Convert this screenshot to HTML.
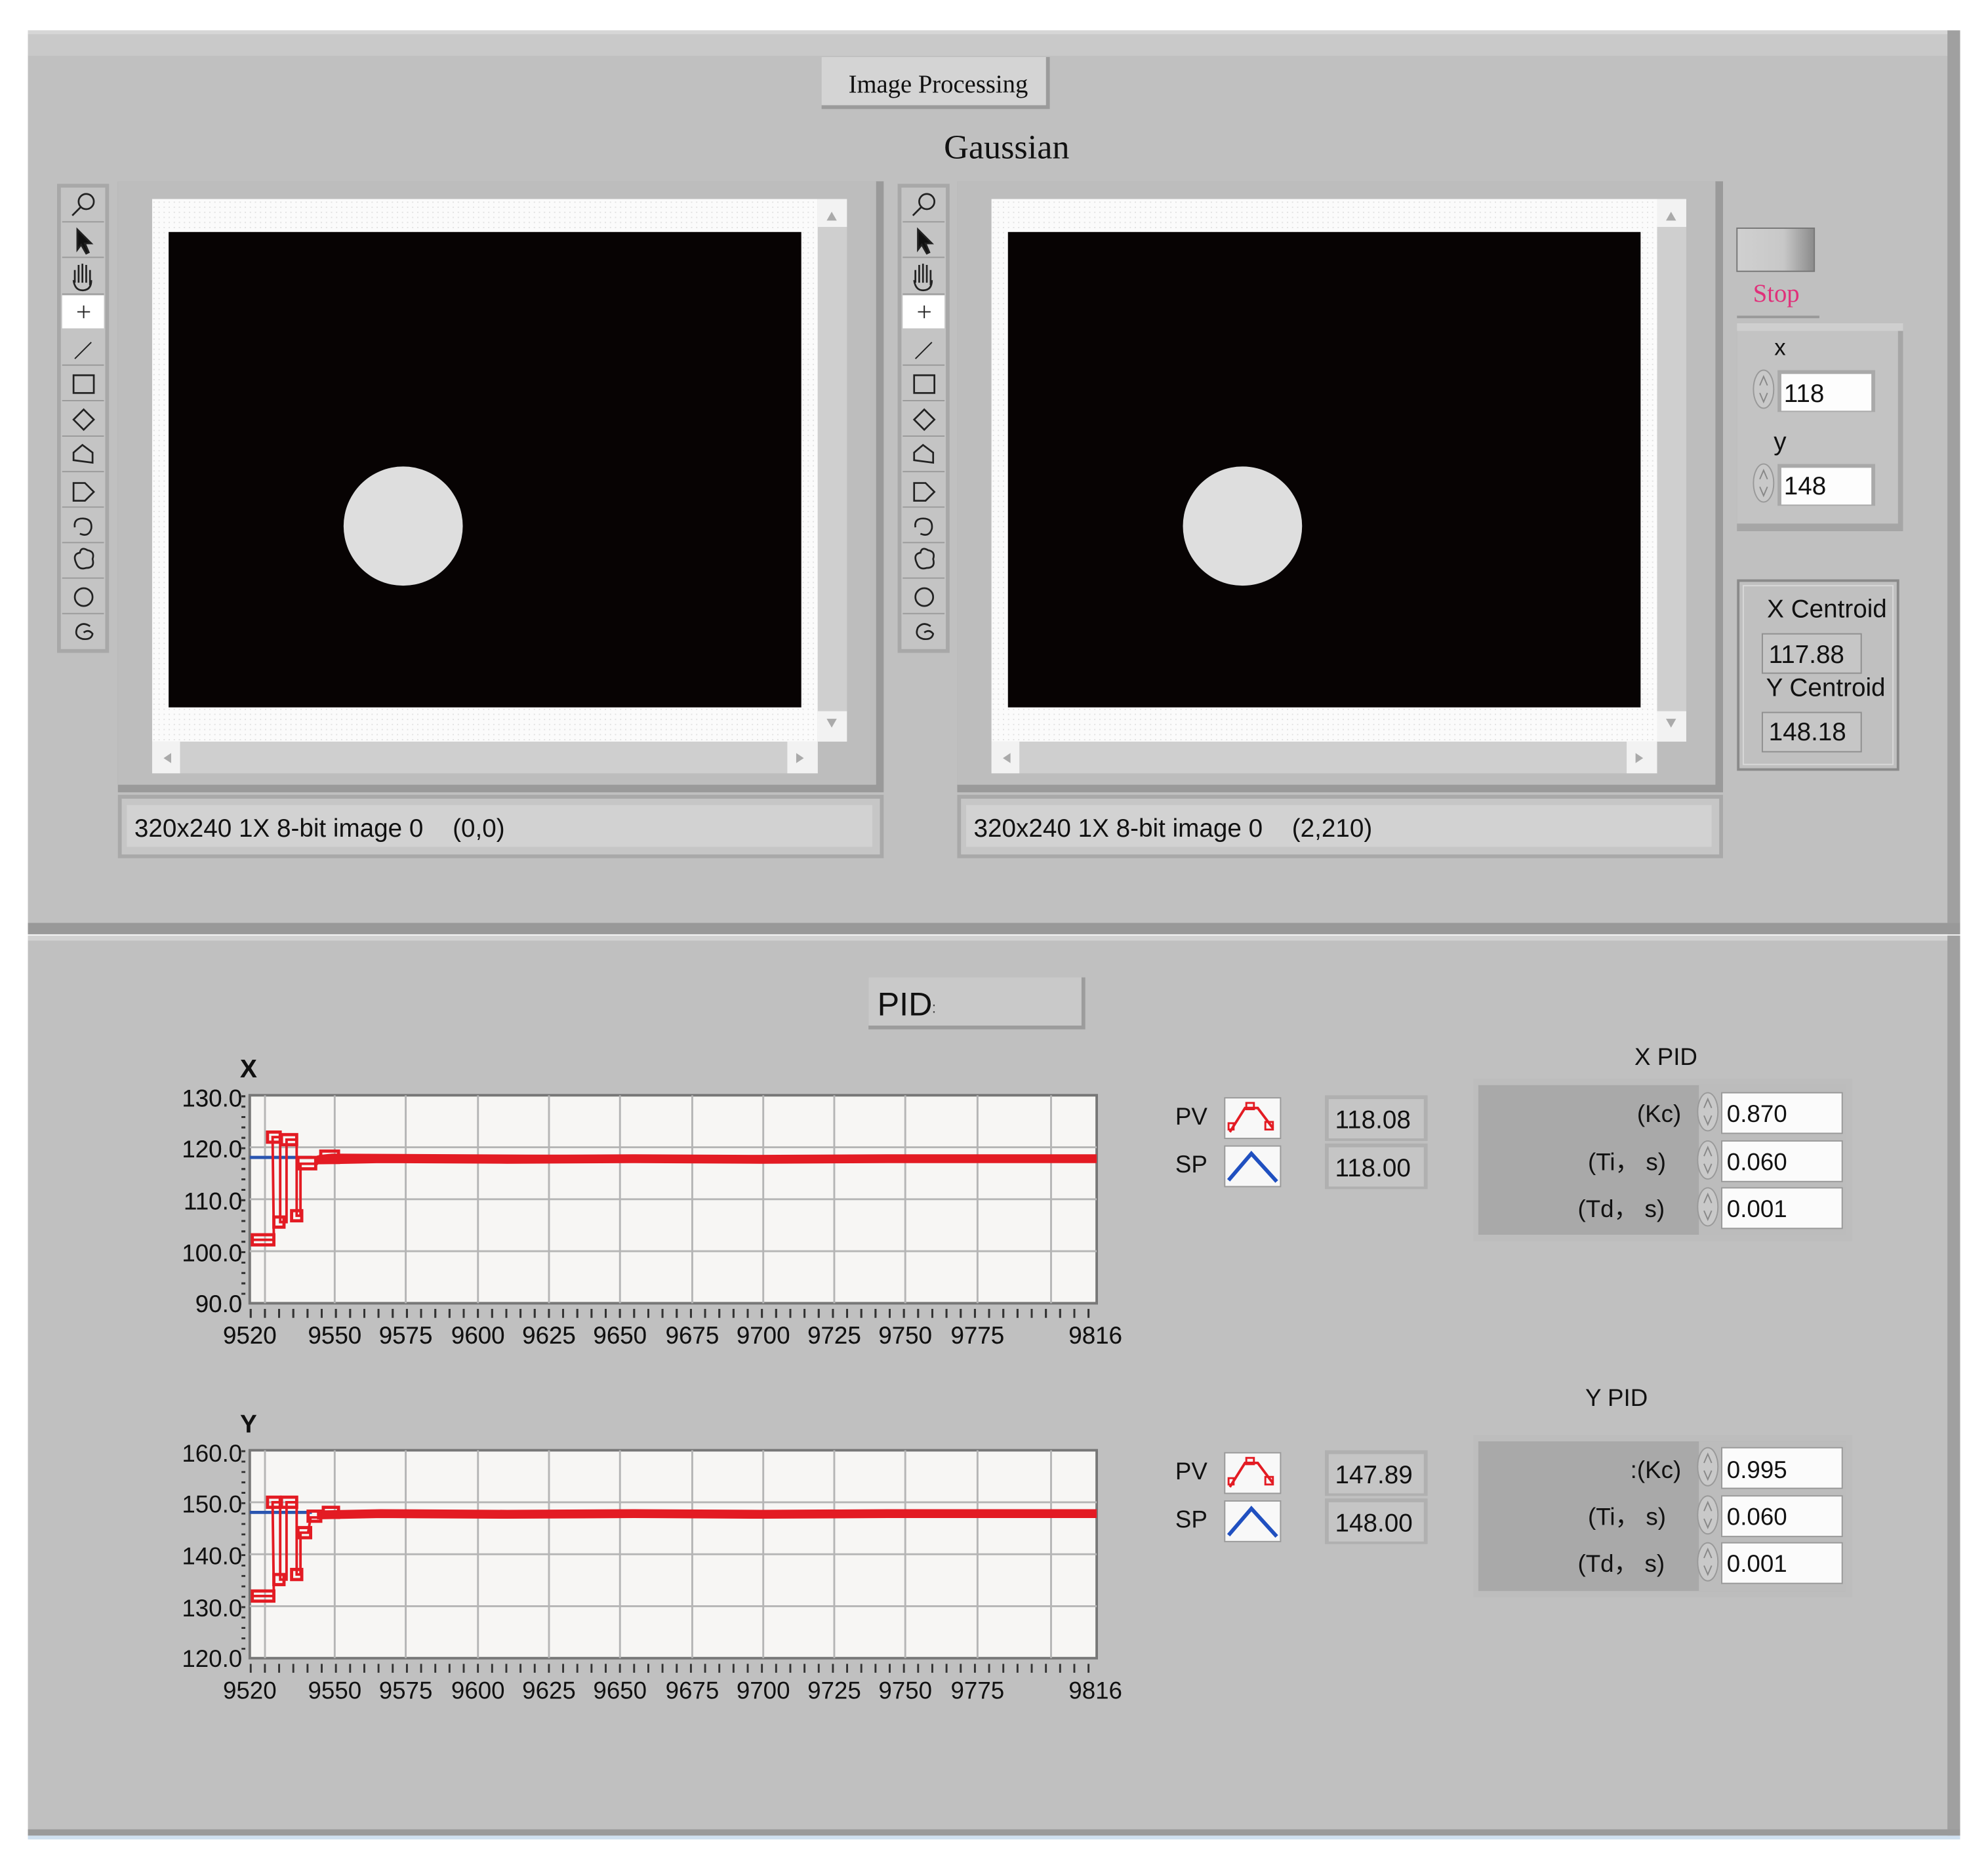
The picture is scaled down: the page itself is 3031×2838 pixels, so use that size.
<!DOCTYPE html>
<html><head><meta charset="utf-8">
<style>
html,body{margin:0;padding:0;background:#fff;overflow:hidden;width:3031px;height:2838px}
svg{display:block}
text{font-family:"Liberation Sans",sans-serif}
.serif{font-family:"Liberation Serif",serif}
</style></head><body>
<svg width="3031" height="2838" viewBox="0 0 1568 1468" preserveAspectRatio="none" xmlns="http://www.w3.org/2000/svg">
<defs>
<pattern id="dots" width="4" height="4" patternUnits="userSpaceOnUse"><rect width="4" height="4" fill="#fbfbfb"/><rect width="1" height="1" fill="#e2e2e2"/></pattern>
<linearGradient id="btn" x1="0" y1="0" x2="1" y2="0"><stop offset="0" stop-color="#d0d0d0"/><stop offset="0.6" stop-color="#c8c8c8"/><stop offset="1" stop-color="#8a8a8a"/></linearGradient>
<g id="toolbar">
 <rect x="0" y="0" width="41" height="370" fill="#a8a8a8"/>
 <rect x="3" y="3" width="35" height="364" fill="#c4c4c4"/>
 <rect x="4" y="88" width="33" height="26" fill="#fff"/>
 <g fill="none" stroke="#222" stroke-width="1.4">
  <circle cx="23" cy="14" r="6"/><line x1="19" y1="18" x2="12" y2="25"/>
  <path d="M16 36 L16 52 L19 48 L23 55 L25 54 L22 47 L27 47 Z" fill="#111"/>
  <path d="M14 78 L14 68 M17 78 L17 64 M20 78 L20 63 M23 78 L23 64 M26 80 L26 68 M13 76 Q14 84 20 84 Q27 84 27 76"/>
  <path d="M21 96 V106 M16 101 H26" stroke-width="1"/>
  <line x1="14" y1="138" x2="27" y2="125" stroke-width="1"/>
  <rect x="13" y="151" width="16" height="14"/>
  <path d="M21 178 L29 186 L21 194 L13 186 Z"/>
  <path d="M13 218 L13 212 L20 206 L28 212 L28 220 Z"/>
  <path d="M13 236 H22 L29 243 L22 250 H13 Z"/>
  <path d="M14 271 Q13 264 20 264 Q28 264 27 272 Q25 279 18 276"/>
  <path d="M15 299 Q12 292 18 291 Q19 286 24 289 Q30 290 28 296 Q30 303 23 303 Q17 305 15 299 Z"/>
  <circle cx="21" cy="326" r="7"/>
  <path d="M26 349 Q20 345 16 350 Q13 357 20 359 Q27 360 28 355 Q25 351 21 354"/>
 </g>
 <g stroke="#999" stroke-width="1"><line x1="4" y1="30" x2="37" y2="30"/><line x1="4" y1="58" x2="37" y2="58"/><line x1="4" y1="87" x2="37" y2="87"/><line x1="4" y1="143" x2="37" y2="143"/><line x1="4" y1="171" x2="37" y2="171"/><line x1="4" y1="199" x2="37" y2="199"/><line x1="4" y1="227" x2="37" y2="227"/><line x1="4" y1="255" x2="37" y2="255"/><line x1="4" y1="283" x2="37" y2="283"/><line x1="4" y1="311" x2="37" y2="311"/><line x1="4" y1="339" x2="37" y2="339"/></g>
</g>
<g id="viewer">
 <rect x="0" y="0" width="604" height="482" fill="#9a9a9a"/>
 <rect x="0" y="0" width="598" height="476" fill="#bdbdbd"/>
 <rect x="27" y="14" width="525" height="428" fill="url(#dots)"/>
 <rect x="40" y="40" width="499" height="375" fill="#070303"/>
 <rect x="552" y="14" width="23" height="428" fill="#cfcfcf"/>
 <rect x="552" y="14" width="23" height="22" fill="#f2f2f2"/>
 <rect x="552" y="418" width="23" height="24" fill="#f2f2f2"/>
 <path d="M559 31 L563 24 L567 31 Z" fill="#aaa"/>
 <path d="M559 424 L563 431 L567 424 Z" fill="#aaa"/>
 <rect x="27" y="442" width="525" height="25" fill="#cfcfcf"/>
 <rect x="27" y="442" width="22" height="25" fill="#f2f2f2"/>
 <rect x="528" y="442" width="24" height="25" fill="#f2f2f2"/>
 <path d="M42 451 L36 455 L42 459 Z" fill="#aaa"/>
 <path d="M535 451 L541 455 L535 459 Z" fill="#aaa"/>
</g>
<g id="status">
 <rect x="0" y="0" width="604" height="50" fill="#a9a9a9"/>
 <rect x="3" y="3" width="598" height="44" fill="#c6c6c6"/>
 <rect x="7" y="8" width="588" height="33" fill="#d2d2d2"/>
</g>
<g id="spin">
 <ellipse cx="9" cy="15" rx="8" ry="15" fill="#c9c9c9" stroke="#999"/>
 <path d="M6 12 L9 5 L12 12 M6 18 L9 25 L12 18" fill="none" stroke="#888" stroke-width="1"/>
</g>
<g id="legend">
 <rect x="0" y="0" width="44" height="32" fill="#f8f8f8" stroke="#999"/>
</g>
</defs>

<!-- Top panel -->
<rect x="22" y="24" width="1524" height="713" fill="#c0c0c0"/>
<rect x="22" y="24" width="1524" height="20" fill="#c9c9c9"/>
<rect x="22" y="24" width="1524" height="3" fill="#d6d6d6"/>
<rect x="1536" y="24" width="10" height="713" fill="#a0a0a0"/>
<rect x="22" y="728" width="1524" height="9" fill="#999"/>

<!-- Bottom panel -->
<rect x="22" y="738" width="1524" height="710" fill="#c0c0c0"/>
<rect x="22" y="738" width="1524" height="4" fill="#d2d2d2"/>
<rect x="1536" y="738" width="10" height="710" fill="#a0a0a0"/>
<rect x="22" y="1443" width="1524" height="5" fill="#9a9a9a"/>
<rect x="22" y="1448" width="1524" height="3" fill="#cfe0f0"/>

<!-- Image Processing button -->
<rect x="648" y="45" width="180" height="41" fill="#9b9b9b"/>
<rect x="648" y="45" width="177" height="38" fill="#d4d4d4"/>
<text x="740" y="73" font-size="20" text-anchor="middle" class="serif" fill="#111">Image Processing</text>
<text x="794" y="125" font-size="27" text-anchor="middle" class="serif" fill="#111">Gaussian</text>

<use href="#toolbar" x="45" y="145"/>
<use href="#toolbar" x="708" y="145"/>
<use href="#viewer" x="93" y="143"/>
<use href="#viewer" x="755" y="143"/>
<circle cx="318" cy="415" r="47" fill="#dedede"/>
<circle cx="980" cy="415" r="47" fill="#dedede"/>
<use href="#status" x="93" y="627"/>
<use href="#status" x="755" y="627"/>
<text x="106" y="660" font-size="20" fill="#111">320x240 1X 8-bit image 0</text>
<text x="357" y="660" font-size="20" fill="#111">(0,0)</text>
<text x="768" y="660" font-size="20" fill="#111">320x240 1X 8-bit image 0</text>
<text x="1019" y="660" font-size="20" fill="#111">(2,210)</text>

<!-- Stop -->
<rect x="1370" y="180" width="61" height="34" fill="url(#btn)" stroke="#777"/>
<text x="1401" y="238" font-size="20" text-anchor="middle" class="serif" fill="#e0307a">Stop</text>
<line x1="1370" y1="250" x2="1435" y2="250" stroke="#999" stroke-width="2"/>

<!-- x/y control panel -->
<rect x="1370" y="255" width="131" height="164" fill="#a6a6a6"/>
<rect x="1370" y="255" width="127" height="158" fill="#c3c3c3"/>
<rect x="1370" y="255" width="131" height="6" fill="#cfcfcf"/>
<text x="1404" y="280" font-size="18" text-anchor="middle" fill="#111">x</text>
<use href="#spin" x="1382" y="292"/>
<rect x="1402" y="292" width="77" height="33" fill="#a9a9a9"/>
<rect x="1405" y="295" width="71" height="29" fill="#fdfdfd"/>
<text x="1407" y="317" font-size="20" fill="#111">118</text>
<text x="1404" y="355" font-size="20" text-anchor="middle" fill="#111">y</text>
<use href="#spin" x="1382" y="366"/>
<rect x="1402" y="366" width="77" height="33" fill="#a9a9a9"/>
<rect x="1405" y="369" width="71" height="29" fill="#fdfdfd"/>
<text x="1407" y="390" font-size="20" fill="#111">148</text>

<!-- Centroid panel -->
<rect x="1371" y="458" width="126" height="149" fill="#c0c0c0" stroke="#8a8a8a" stroke-width="2"/>
<rect x="1375" y="462" width="118" height="141" fill="none" stroke="#d8d8d8" stroke-width="1"/>
<text x="1441" y="487" font-size="20" text-anchor="middle" fill="#111">X Centroid</text>
<rect x="1390" y="500" width="78" height="31" fill="#c6c6c6" stroke="#8f8f8f"/>
<text x="1395" y="523" font-size="20" fill="#111">117.88</text>
<text x="1440" y="549" font-size="20" text-anchor="middle" fill="#111">Y Centroid</text>
<rect x="1390" y="562" width="78" height="31" fill="#c6c6c6" stroke="#8f8f8f"/>
<text x="1395" y="584" font-size="20" fill="#111">148.18</text>

<!-- PID field -->
<rect x="685" y="771" width="171" height="41" fill="#9c9c9c"/>
<rect x="685" y="771" width="168" height="38" fill="#c9c9c9"/>
<text x="692" y="801" font-size="26" fill="#111">PID</text><text x="735" y="799" font-size="12" fill="#444">:</text>

<!-- X chart -->
<g id="chartX">
<text x="196" y="850" font-size="20" font-weight="bold" text-anchor="middle" fill="#111">X</text>
<rect x="197" y="864" width="668" height="164" fill="#f7f6f4" stroke="#777" stroke-width="2"/>
<g stroke="#b5b5b5" stroke-width="1.5">
 <line x1="209" y1="864" x2="209" y2="1028"/><line x1="264" y1="864" x2="264" y2="1028"/><line x1="320" y1="864" x2="320" y2="1028"/><line x1="377" y1="864" x2="377" y2="1028"/><line x1="433" y1="864" x2="433" y2="1028"/><line x1="489" y1="864" x2="489" y2="1028"/><line x1="546" y1="864" x2="546" y2="1028"/><line x1="602" y1="864" x2="602" y2="1028"/><line x1="658" y1="864" x2="658" y2="1028"/><line x1="714" y1="864" x2="714" y2="1028"/><line x1="771" y1="864" x2="771" y2="1028"/><line x1="829" y1="864" x2="829" y2="1028"/>
 <line x1="197" y1="905" x2="865" y2="905"/><line x1="197" y1="946" x2="865" y2="946"/><line x1="197" y1="987" x2="865" y2="987"/>
</g>
<line x1="192" y1="864" x2="192" y2="1028" stroke="#333" stroke-width="3" stroke-dasharray="1.5 6.7"/>
<line x1="197" y1="1036" x2="866" y2="1036" stroke="#333" stroke-width="7" stroke-dasharray="1.5 9.7"/>
<g font-size="19" fill="#111" text-anchor="end">
 <text x="191" y="873">130.0</text><text x="191" y="913">120.0</text><text x="191" y="954">110.0</text><text x="191" y="995">100.0</text><text x="191" y="1035">90.0</text>
</g>
<g font-size="19" fill="#111" text-anchor="middle">
 <text x="197" y="1060">9520</text><text x="264" y="1060">9550</text><text x="320" y="1060">9575</text><text x="377" y="1060">9600</text><text x="433" y="1060">9625</text><text x="489" y="1060">9650</text><text x="546" y="1060">9675</text><text x="602" y="1060">9700</text><text x="658" y="1060">9725</text><text x="714" y="1060">9750</text><text x="771" y="1060">9775</text><text x="864" y="1060">9816</text>
</g>
<line x1="197" y1="913" x2="246" y2="913" stroke="#2a55b0" stroke-width="2.5"/>
<path d="M199 978 H216 L215 897 L221 897 L221 964 L226 964 L226 899 L234 899 L234 959 L237 959 L237 918 L250 918 L252 912 L262 911 L865 914" fill="none" stroke="#e31b23" stroke-width="2"/>
<path d="M250 915 L300 914 L400 914.5 L500 914 L600 914.5 L700 914 L865 914" fill="none" stroke="#e31b23" stroke-width="7"/>
<g fill="none" stroke="#e31b23" stroke-width="2.5">
 <rect x="199" y="974" width="17" height="8"/><rect x="211" y="893" width="10" height="8"/><rect x="216" y="960" width="8" height="8"/><rect x="222" y="895" width="12" height="8"/><rect x="230" y="955" width="8" height="8"/><rect x="235" y="913" width="14" height="9"/><rect x="253" y="908" width="14" height="9"/>
</g>
</g>
<use href="#chartX" x="0" y="0"/>

<!-- Y chart -->
<text x="196" y="1130" font-size="20" font-weight="bold" text-anchor="middle" fill="#111">Y</text>
<rect x="197" y="1144" width="668" height="164" fill="#f7f6f4" stroke="#777" stroke-width="2"/>
<g stroke="#b5b5b5" stroke-width="1.5">
 <line x1="209" y1="1144" x2="209" y2="1308"/><line x1="264" y1="1144" x2="264" y2="1308"/><line x1="320" y1="1144" x2="320" y2="1308"/><line x1="377" y1="1144" x2="377" y2="1308"/><line x1="433" y1="1144" x2="433" y2="1308"/><line x1="489" y1="1144" x2="489" y2="1308"/><line x1="546" y1="1144" x2="546" y2="1308"/><line x1="602" y1="1144" x2="602" y2="1308"/><line x1="658" y1="1144" x2="658" y2="1308"/><line x1="714" y1="1144" x2="714" y2="1308"/><line x1="771" y1="1144" x2="771" y2="1308"/><line x1="829" y1="1144" x2="829" y2="1308"/>
 <line x1="197" y1="1185" x2="865" y2="1185"/><line x1="197" y1="1226" x2="865" y2="1226"/><line x1="197" y1="1267" x2="865" y2="1267"/>
</g>
<line x1="192" y1="1144" x2="192" y2="1308" stroke="#333" stroke-width="3" stroke-dasharray="1.5 6.7"/>
<line x1="197" y1="1316" x2="866" y2="1316" stroke="#333" stroke-width="7" stroke-dasharray="1.5 9.7"/>
<g font-size="19" fill="#111" text-anchor="end">
 <text x="191" y="1153">160.0</text><text x="191" y="1193">150.0</text><text x="191" y="1234">140.0</text><text x="191" y="1275">130.0</text><text x="191" y="1315">120.0</text>
</g>
<g font-size="19" fill="#111" text-anchor="middle">
 <text x="197" y="1340">9520</text><text x="264" y="1340">9550</text><text x="320" y="1340">9575</text><text x="377" y="1340">9600</text><text x="433" y="1340">9625</text><text x="489" y="1340">9650</text><text x="546" y="1340">9675</text><text x="602" y="1340">9700</text><text x="658" y="1340">9725</text><text x="714" y="1340">9750</text><text x="771" y="1340">9775</text><text x="864" y="1340">9816</text>
</g>
<line x1="197" y1="1193" x2="246" y2="1193" stroke="#2a55b0" stroke-width="2.5"/>
<path d="M199 1259 H216 L215 1185 L221 1185 L221 1246 L226 1246 L226 1185 L234 1185 L234 1242 L237 1242 L237 1209 L243 1209 L245 1197 L252 1197 L262 1193 L865 1194" fill="none" stroke="#e31b23" stroke-width="2"/>
<path d="M250 1195 L300 1194 L400 1194.5 L500 1194 L600 1194.5 L700 1194 L865 1194" fill="none" stroke="#e31b23" stroke-width="7"/>
<g fill="none" stroke="#e31b23" stroke-width="2.5">
 <rect x="199" y="1255" width="17" height="8"/><rect x="211" y="1181" width="10" height="8"/><rect x="216" y="1242" width="8" height="8"/><rect x="222" y="1181" width="12" height="8"/><rect x="230" y="1238" width="8" height="8"/><rect x="235" y="1205" width="10" height="8"/><rect x="243" y="1192" width="10" height="8"/><rect x="255" y="1189" width="12" height="8"/>
</g>

<!-- Legends & values -->
<g font-size="19" fill="#111">
<text x="927" y="887">PV</text><text x="927" y="925">SP</text>
<text x="927" y="1167">PV</text><text x="927" y="1205">SP</text>
</g>
<use href="#legend" x="966" y="866"/><use href="#legend" x="966" y="904"/>
<use href="#legend" x="966" y="1146"/><use href="#legend" x="966" y="1184"/>
<g fill="none" stroke-width="2">
 <path d="M970 893 L982 874 L992 874 L1004 890" stroke="#e31b23"/><rect x="969" y="886" width="4" height="5" stroke="#e31b23" stroke-width="1.5"/><rect x="998" y="885" width="6" height="6" stroke="#e31b23" stroke-width="1.5"/><rect x="983" y="870" width="6" height="5" stroke="#e31b23" stroke-width="1.5"/>
 <path d="M969 931 L987 910 L1007 932" stroke="#2050c0" stroke-width="3"/>
 <path d="M970 1173 L982 1154 L992 1154 L1004 1170" stroke="#e31b23"/><rect x="969" y="1166" width="4" height="5" stroke="#e31b23" stroke-width="1.5"/><rect x="998" y="1165" width="6" height="6" stroke="#e31b23" stroke-width="1.5"/><rect x="983" y="1150" width="6" height="5" stroke="#e31b23" stroke-width="1.5"/>
 <path d="M969 1211 L987 1190 L1007 1212" stroke="#2050c0" stroke-width="3"/>
</g>
<g>
 <rect x="1045" y="864" width="81" height="36" fill="#b0b0b0"/><rect x="1048" y="867" width="75" height="31" fill="#c5c5c5"/>
 <rect x="1045" y="902" width="81" height="36" fill="#b0b0b0"/><rect x="1048" y="905" width="75" height="31" fill="#c5c5c5"/>
 <rect x="1045" y="1144" width="81" height="36" fill="#b0b0b0"/><rect x="1048" y="1147" width="75" height="31" fill="#c5c5c5"/>
 <rect x="1045" y="1182" width="81" height="36" fill="#b0b0b0"/><rect x="1048" y="1185" width="75" height="31" fill="#c5c5c5"/>
</g>
<g font-size="20" fill="#111">
<text x="1053" y="890">118.08</text><text x="1053" y="928">118.00</text>
<text x="1053" y="1170">147.89</text><text x="1053" y="1208">148.00</text>
</g>

<!-- X PID -->
<text x="1314" y="840" font-size="19" text-anchor="middle" fill="#111">X PID</text>
<rect x="1162" y="851" width="299" height="128" fill="#bdbdbd"/>
<rect x="1166" y="856" width="290" height="118" fill="#a9a9a9"/>
<rect x="1340" y="856" width="116" height="118" fill="#bcbcbc"/>
<g font-size="19" fill="#111" text-anchor="end">
<text x="1326" y="885">(Kc)</text><text x="1314" y="923">(Ti， s)</text><text x="1313" y="960">(Td， s)</text>
</g>
<use href="#spin" x="1338" y="862"/><use href="#spin" x="1338" y="900"/><use href="#spin" x="1338" y="937"/>
<rect x="1358" y="862" width="95" height="32" fill="#fbfbfb" stroke="#999"/>
<rect x="1358" y="900" width="95" height="32" fill="#fbfbfb" stroke="#999"/>
<rect x="1358" y="937" width="95" height="32" fill="#fbfbfb" stroke="#999"/>
<g font-size="19" fill="#111"><text x="1362" y="885">0.870</text><text x="1362" y="923">0.060</text><text x="1362" y="960">0.001</text></g>

<!-- Y PID -->
<text x="1275" y="1109" font-size="19" text-anchor="middle" fill="#111">Y PID</text>
<rect x="1162" y="1132" width="299" height="128" fill="#bdbdbd"/>
<rect x="1166" y="1137" width="290" height="118" fill="#a9a9a9"/>
<rect x="1340" y="1137" width="116" height="118" fill="#bcbcbc"/>
<g font-size="19" fill="#111" text-anchor="end">
<text x="1326" y="1166">:(Kc)</text><text x="1314" y="1203">(Ti， s)</text><text x="1313" y="1240">(Td， s)</text>
</g>
<use href="#spin" x="1338" y="1142"/><use href="#spin" x="1338" y="1180"/><use href="#spin" x="1338" y="1217"/>
<rect x="1358" y="1142" width="95" height="32" fill="#fbfbfb" stroke="#999"/>
<rect x="1358" y="1180" width="95" height="32" fill="#fbfbfb" stroke="#999"/>
<rect x="1358" y="1217" width="95" height="32" fill="#fbfbfb" stroke="#999"/>
<g font-size="19" fill="#111"><text x="1362" y="1166">0.995</text><text x="1362" y="1203">0.060</text><text x="1362" y="1240">0.001</text></g>
</svg>
</body></html>
